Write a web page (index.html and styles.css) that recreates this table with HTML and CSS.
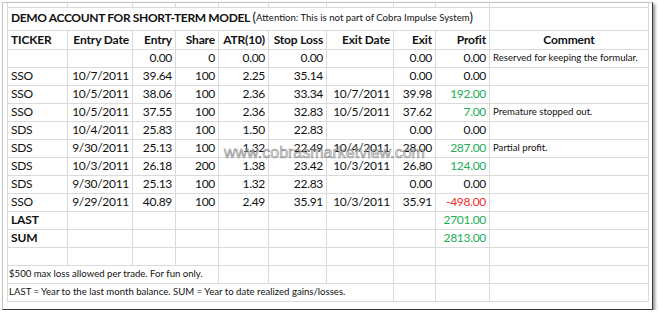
FILE: index.html
```html
<!DOCTYPE html>
<html lang="en">
<head>
  <meta charset="UTF-8">
  <title>Demo Account for Short-Term Model</title>
  <link rel="stylesheet" href="styles.css">
</head>
<body>
  <div class="frame">
    <div class="sheet">
      <!-- cut-off row above the title -->
      <div class="cell"></div><div class="cell"></div><div class="cell"></div><div class="cell"></div><div class="cell"></div>
      <div class="cell"></div><div class="cell"></div><div class="cell"></div><div class="cell"></div><div class="cell"></div>

      <div class="cell title"><span><b>DEMO ACCOUNT FOR SHORT-TERM MODEL</b> <span class="paren">(</span><span class="note">Attention: This is not part of Cobra Impulse System</span><span class="paren">)</span></span></div>
      <div class="cell"></div>

      <div class="cell head l">TICKER</div>
      <div class="cell head">Entry Date</div>
      <div class="cell head">Entry</div>
      <div class="cell head">Share</div>
      <div class="cell head">ATR(10)</div>
      <div class="cell head">Stop Loss</div>
      <div class="cell head">Exit Date</div>
      <div class="cell head">Exit</div>
      <div class="cell head">Profit</div>
      <div class="cell head c">Comment</div>

      <div class="cell"></div><div class="cell"></div>
      <div class="cell">0.00</div><div class="cell">0</div><div class="cell">0.00</div><div class="cell">0.00</div>
      <div class="cell"></div><div class="cell">0.00</div><div class="cell">0.00</div>
      <div class="cell l note">Reserved for keeping the formular.</div>

      <div class="cell l">SSO</div><div class="cell">10/7/2011</div><div class="cell">39.64</div><div class="cell">100</div>
      <div class="cell">2.25</div><div class="cell">35.14</div><div class="cell"></div><div class="cell">0.00</div>
      <div class="cell">0.00</div><div class="cell"></div>

      <div class="cell l">SSO</div><div class="cell">10/5/2011</div><div class="cell">38.06</div><div class="cell">100</div>
      <div class="cell">2.36</div><div class="cell">33.34</div><div class="cell">10/7/2011</div><div class="cell">39.98</div>
      <div class="cell up">192.00</div><div class="cell"></div>

      <div class="cell l">SSO</div><div class="cell">10/5/2011</div><div class="cell">37.55</div><div class="cell">100</div>
      <div class="cell">2.36</div><div class="cell">32.83</div><div class="cell">10/5/2011</div><div class="cell">37.62</div>
      <div class="cell up">7.00</div><div class="cell l note">Premature stopped out.</div>

      <div class="cell l">SDS</div><div class="cell">10/4/2011</div><div class="cell">25.83</div><div class="cell">100</div>
      <div class="cell">1.50</div><div class="cell">22.83</div><div class="cell"></div><div class="cell">0.00</div>
      <div class="cell">0.00</div><div class="cell"></div>

      <div class="cell l">SDS</div><div class="cell">9/30/2011</div><div class="cell">25.13</div><div class="cell">100</div>
      <div class="cell">1.32</div><div class="cell">22.49</div><div class="cell">10/4/2011</div><div class="cell">28.00</div>
      <div class="cell up">287.00</div><div class="cell l note">Partial profit.</div>

      <div class="cell l">SDS</div><div class="cell">10/3/2011</div><div class="cell">26.18</div><div class="cell">200</div>
      <div class="cell">1.38</div><div class="cell">23.42</div><div class="cell">10/3/2011</div><div class="cell">26.80</div>
      <div class="cell up">124.00</div><div class="cell"></div>

      <div class="cell l">SDS</div><div class="cell">9/30/2011</div><div class="cell">25.13</div><div class="cell">100</div>
      <div class="cell">1.32</div><div class="cell">22.83</div><div class="cell"></div><div class="cell">0.00</div>
      <div class="cell">0.00</div><div class="cell"></div>

      <div class="cell l">SSO</div><div class="cell">9/29/2011</div><div class="cell">40.89</div><div class="cell">100</div>
      <div class="cell">2.49</div><div class="cell">35.91</div><div class="cell">10/3/2011</div><div class="cell">35.91</div>
      <div class="cell down">-498.00</div><div class="cell"></div>

      <div class="cell l head">LAST</div>
      <div class="cell"></div><div class="cell"></div><div class="cell"></div><div class="cell"></div>
      <div class="cell"></div><div class="cell"></div><div class="cell"></div>
      <div class="cell up">2701.00</div><div class="cell"></div>

      <div class="cell l head">SUM</div>
      <div class="cell"></div><div class="cell"></div><div class="cell"></div><div class="cell"></div>
      <div class="cell"></div><div class="cell"></div><div class="cell"></div>
      <div class="cell up">2813.00</div><div class="cell"></div>

      <div class="cell"></div><div class="cell"></div><div class="cell"></div><div class="cell"></div><div class="cell"></div>
      <div class="cell"></div><div class="cell"></div><div class="cell"></div><div class="cell"></div><div class="cell"></div>

      <div class="cell l note foot span4">$500 max loss allowed per trade. For fun only.</div>
      <div class="cell"></div><div class="cell"></div><div class="cell"></div>
      <div class="cell"></div><div class="cell"></div><div class="cell"></div>

      <div class="cell l note foot span7">LAST = Year to the last month balance. SUM = Year to date realized gains/losses.</div>
      <div class="cell"></div><div class="cell"></div><div class="cell"></div>
    </div>

    <div class="watermark">www.cobrasmarketview.com</div>
  </div>
</body>
</html>
```

FILE: styles.css
```css
* {
  margin: 0;
  padding: 0;
  box-sizing: border-box;
}

body {
  background: #ffffff;
  font-family: Lato, 'Open Sans', sans-serif;
  color: #111111;
}

.frame {
  position: relative;
  width: 651px;
  height: 308px;
  margin: 2px 0 0 2px;
  background: #ffffff;
  border: 1px solid #c4c4c4;
  border-right-color: #3a3a3a;
  border-bottom-color: #3a3a3a;
  box-shadow: 2px 2px 3px rgba(0, 0, 0, .45);
}

.sheet {
  display: grid;
  grid-template-columns: 60px 65px 43px 43px 50px 58px 67px 42px 54px 159px;
  grid-template-rows: 5px 23px 19px repeat(14, 18px);
  width: 642px;
  margin-left: 4px;
  border-left: 1px solid #dadada;
}

.cell {
  display: flex;
  align-items: flex-end;
  justify-content: flex-end;
  padding: 0 3px 2px;
  font-size: 12px;
  line-height: 14px;
  letter-spacing: -0.3px;
  white-space: nowrap;
  border-right: 1px solid #dadada;
  border-bottom: 1px solid #dadada;
}

.l {
  justify-content: flex-start;
}

.c {
  justify-content: center;
}

.head {
  font-weight: bold;
  letter-spacing: -0.15px;
}

.title {
  grid-column: span 9;
  justify-content: flex-start;
  padding-bottom: 4px;
  letter-spacing: -0.35px;
}

.paren {
  font-size: 13px;
  letter-spacing: 0;
}

.note {
  font-size: 9.6px;
  letter-spacing: 0;
}

.title .note {
  position: relative;
  top: -1px;
}

.foot {
  padding-left: 1px;
}

.span4 {
  grid-column: span 4;
}

.span7 {
  grid-column: span 7;
}

.up {
  color: #22ad57;
}

.down {
  color: #f52a2a;
}

.watermark {
  position: absolute;
  left: 221px;
  top: 142px;
  font-family: 'Liberation Sans', Arial, sans-serif;
  font-size: 16px;
  line-height: 16px;
  color: rgba(215, 215, 215, .55);
  -webkit-text-stroke: 0.6px rgba(110, 110, 110, .8);
}
```
